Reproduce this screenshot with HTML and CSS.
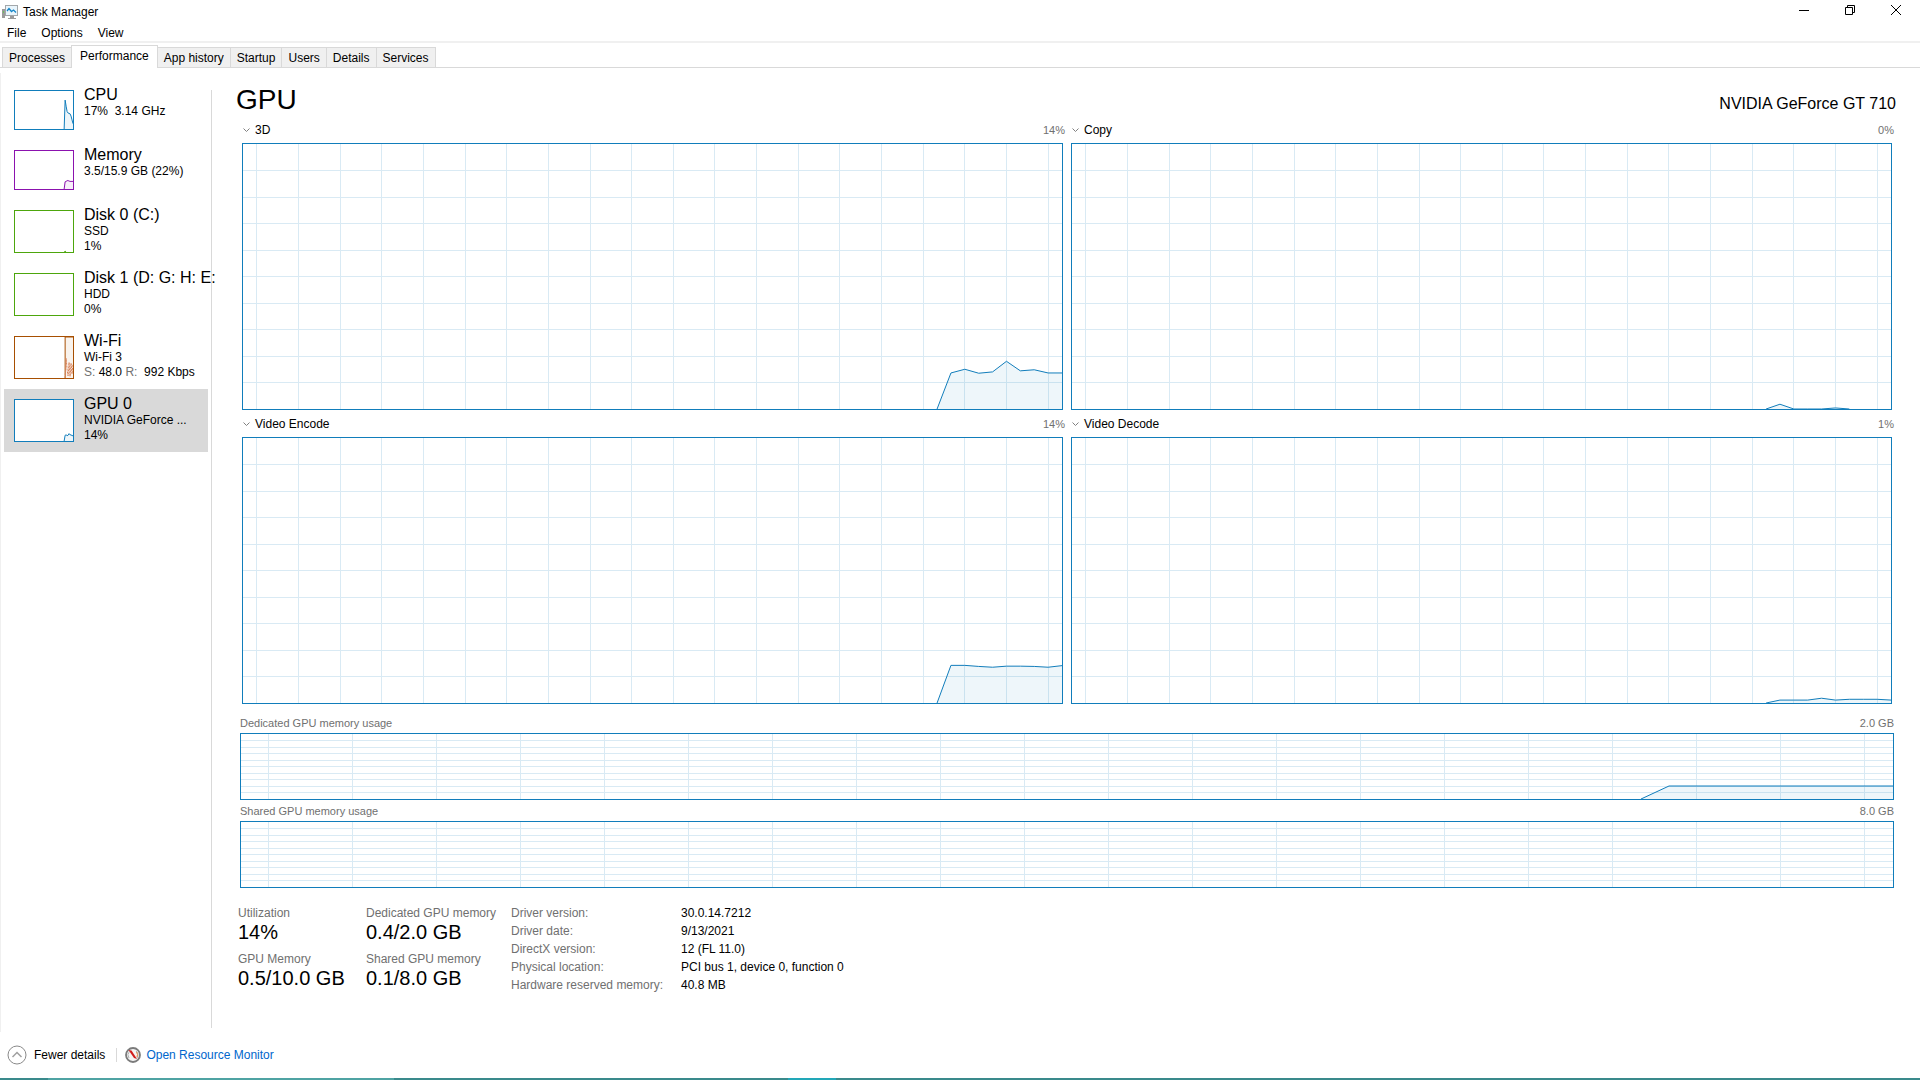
FILE: index.html
```html
<!DOCTYPE html>
<html lang="en">
<head>
    <meta charset="UTF-8">
    <meta name="viewport" content="width=device-width, initial-scale=1.0">
    <title>Task Manager</title>
    <link rel="stylesheet" href="styles.css">
</head>
<body>

<header class="titlebar">
    <svg class="app-icon" width="17" height="15" viewBox="0 0 17 15">
        <rect x="0" y="4" width="3" height="9" fill="#9a9a9a"/>
        <rect x="1" y="6" width="1" height="2" fill="#6fbf5f"/>
        <rect x="3.500" y="0.500" width="12" height="10" fill="#e9f5fc" stroke="#a3a7aa"/>
        <path d="M5 6 L7 3.500 L9.500 6.500 L11.500 5 L14 7.500" fill="none" stroke="#1786c8" stroke-width="1.300"/>
        <path d="M8 11h4v2h2v1H6v-1h2z" fill="#9a9a9a"/>
    </svg>
    <span class="app-name">Task Manager</span>
    <div class="window-buttons">
        <button aria-label="Minimize"><svg width="10" height="10"><path d="M0 5.500h10"/></svg></button>
        <button aria-label="Restore"><svg width="10" height="10"><path d="M0.500 2.500h7v7h-7zM2.500 2.500v-2h7v7h-2"/></svg></button>
        <button aria-label="Close"><svg width="10" height="10"><path d="M0 0L10 10M10 0L0 10"/></svg></button>
    </div>
</header>

<nav class="menu">
    <button>File</button>
    <button>Options</button>
    <button>View</button>
</nav>

<nav class="tabs">
    <button>Processes</button>
    <button class="active">Performance</button>
    <button>App history</button>
    <button>Startup</button>
    <button>Users</button>
    <button>Details</button>
    <button>Services</button>
</nav>

<div class="content">
    <aside class="sidebar">
        <button class="item">
            <svg class="thumb blue" data-values="0,76,60,46,42,41,40,34,24,14"></svg>
            <span class="info"><span class="name">CPU</span><span>17%&nbsp; 3.14 GHz</span></span>
        </button>
        <button class="item">
            <svg class="thumb purple" data-values="0,19,20,22,22,21,20,20,20,20"></svg>
            <span class="info"><span class="name">Memory</span><span>3.5/15.9 GB (22%)</span></span>
        </button>
        <button class="item">
            <svg class="thumb tall green" data-values="0,2,0"></svg>
            <span class="info"><span class="name">Disk 0 (C:)</span><span>SSD</span><span>1%</span></span>
        </button>
        <button class="item">
            <svg class="thumb tall green"></svg>
            <span class="info"><span class="name">Disk 1 (D: G: H: E:</span><span>HDD</span><span>0%</span></span>
        </button>
        <button class="item">
            <svg class="thumb tall orange" data-values="100,100,100,100,100,100,100,100,100" data-second="0,48,20,5,38,4,36,10,34"></svg>
            <span class="info"><span class="name">Wi-Fi</span><span>Wi-Fi 3</span><span><i>S:</i> 48.0 <i>R:</i>&nbsp; 992 Kbps</span></span>
        </button>
        <button class="item selected">
            <svg class="thumb tall blue" data-values="0,14,15,13,14,18,15,15,13,13"></svg>
            <span class="info"><span class="name">GPU 0</span><span>NVIDIA GeForce ...</span><span>14%</span></span>
        </button>
    </aside>

    <main>
        <div class="heading">
            <h1>GPU</h1>
            <h2>NVIDIA GeForce GT 710</h2>
        </div>

        <div class="engines">
            <section>
                <div class="engine-head">
                    <button><svg width="7" height="5"><path d="M0.500 0.500l3 3l3-3"/></svg>3D</button>
                    <span>14%</span>
                </div>
                <svg class="chart blue" data-grid="1" data-values="0,13.6,15,13.5,14,18,14.4,14.8,13.6,13.6"></svg>
            </section>
            <section>
                <div class="engine-head">
                    <button><svg width="7" height="5"><path d="M0.500 0.500l3 3l3-3"/></svg>Copy</button>
                    <span>0%</span>
                </div>
                <svg class="chart blue" data-grid="1" data-values="0,1.8,0,0,0,0.4,0"></svg>
            </section>
            <section>
                <div class="engine-head">
                    <button><svg width="7" height="5"><path d="M0.500 0.500l3 3l3-3"/></svg>Video Encode</button>
                    <span>14%</span>
                </div>
                <svg class="chart blue" data-grid="1" data-values="0,14.2,14.2,13.8,13.5,13.9,13.9,13.8,13.5,14.1"></svg>
            </section>
            <section>
                <div class="engine-head">
                    <button><svg width="7" height="5"><path d="M0.500 0.500l3 3l3-3"/></svg>Video Decode</button>
                    <span>1%</span>
                </div>
                <svg class="chart blue" data-grid="1" data-values="0,1.1,1.1,1.1,1.8,1.1,1.4,1.4,1.4,1.1"></svg>
            </section>
        </div>

        <div class="memory">
            <div class="memory-head"><span>Dedicated GPU memory usage</span><span>2.0 GB</span></div>
            <svg class="chart small blue" data-grid="1" data-values="0,20,20,20,20,20,20,20,20,20"></svg>
            <div class="memory-head"><span>Shared GPU memory usage</span><span>8.0 GB</span></div>
            <svg class="chart small blue" data-grid="1"></svg>
        </div>

        <div class="stats">
            <dl>
                <dt>Utilization</dt>
                <dd>14%</dd>
                <dt>GPU Memory</dt>
                <dd>0.5/10.0 GB</dd>
            </dl>
            <dl>
                <dt>Dedicated GPU memory</dt>
                <dd>0.4/2.0 GB</dd>
                <dt>Shared GPU memory</dt>
                <dd>0.1/8.0 GB</dd>
            </dl>
            <table>
                <tr><th>Driver version:</th><td>30.0.14.7212</td></tr>
                <tr><th>Driver date:</th><td>9/13/2021</td></tr>
                <tr><th>DirectX version:</th><td>12 (FL 11.0)</td></tr>
                <tr><th>Physical location:</th><td>PCI bus 1, device 0, function 0</td></tr>
                <tr><th>Hardware reserved memory:</th><td>40.8 MB</td></tr>
            </table>
        </div>
    </main>
</div>

<footer>
    <button class="fewer">
        <svg width="20" height="20" viewBox="0 0 20 20" fill="none">
            <circle cx="10" cy="10" r="9" stroke="#8a8a8a"/>
            <path d="M5.500 12L10 7.500L14.500 12" stroke="#a0a0a0" stroke-width="1.500"/>
        </svg>
        Fewer details
    </button>
    <span class="separator"></span>
    <svg width="16" height="16" viewBox="0 0 16 16" fill="none">
        <circle cx="8" cy="8" r="7" fill="#f4f4f4" stroke="#7b7b7b" stroke-width="1.800"/>
        <path d="M4 11A5 5 0 0 1 4.500 4.500M11 4a5 5 0 0 1 1 7" stroke="#b0b0b0"/>
        <path d="M11.500 5a5 5 0 0 1 0.500 5" stroke="#e58b4a"/>
        <path d="M3.500 3L6.500 3.500L12 12L9 11Z" fill="#d01c1c"/>
    </svg>
    <a href="#">Open Resource Monitor</a>
</footer>
<div class="taskbar"><span class="running"></span><span class="current"></span></div>

<script>
    // every chart covers 60 samples, newest on the right
    const STEPS = 59;
    const SHOWN = 10;

    function linePoints(values, first, w, h) {
        return values.map((v, i) => `${(first + i) * w / STEPS},${h - v * h / 100}`).join(' ');
    }

    function drawChart(svg) {
        const box = svg.getBoundingClientRect();
        const w = box.width - 2;
        const h = box.height - 2;
        let out = '';

        if (svg.dataset.grid) {
            for (let i = 1; i < STEPS; i += 3) {
                const x = Math.ceil(i * w / STEPS) - 0.5;
                out += `<line class="grid" x1="${x}" y1="0" x2="${x}" y2="${h}"/>`;
            }
            for (let i = 1; i < SHOWN; i++) {
                const y = Math.floor(i * h / 10) + 0.5;
                out += `<line class="grid" x1="0" y1="${y}" x2="${w}" y2="${y}"/>`;
            }
        }

        if (svg.dataset.values) {
            const values = svg.dataset.values.split(',').map(Number);
            // short series that end at zero start at the same sample as the full ones
            const first = values[values.length - 1] === 0 ? STEPS - SHOWN + 1 : STEPS - values.length + 1;
            const start = first * w / STEPS;
            const end = (first + values.length - 1) * w / STEPS;
            const points = `${start},${h} ${linePoints(values, first, w, h)}`;
            out += `<polygon class="area" points="${points} ${end},${h}"/>`;
            out += `<polyline class="line" points="${points}"/>`;
        }

        if (svg.dataset.second) {
            const values = svg.dataset.second.split(',').map(Number);
            const points = linePoints(values, STEPS - values.length + 1, w, h);
            out += `<polyline class="line dashed" points="${points}"/>`;
        }

        svg.setAttribute('viewBox', `0 0 ${w} ${h}`);
        svg.innerHTML = out;
    }

    function drawAll() {
        document.querySelectorAll('.chart, .thumb').forEach(drawChart);
    }

    drawAll();
    window.addEventListener('resize', drawAll);
</script>

</body>
</html>
```
FILE: styles.css
```css
* {
    box-sizing: border-box;
}

body {
    margin: 0;
    min-height: 100vh;
    display: flex;
    flex-direction: column;
    background: #fff;
    color: #000;
    font-family: "Liberation Sans", Arial, sans-serif;
    font-size: 12px;
}

button {
    padding: 0;
    border: none;
    background: none;
    color: inherit;
    font: inherit;
    text-align: left;
}

/* Title bar and menu */
.titlebar {
    display: flex;
    align-items: center;
    height: 24px;
    padding: 0 1px 0 2px;
}

.app-name {
    margin-left: 4px;
}

.window-buttons {
    display: flex;
    margin-left: auto;
}

.window-buttons button {
    display: flex;
    justify-content: center;
    width: 46px;
    padding-bottom: 4px;
}

.window-buttons path {
    fill: none;
    stroke: #000;
}

.menu {
    display: flex;
    gap: 15px;
    height: 19px;
    padding: 0 7px;
    border-bottom: 2px solid #f0f0f0;
}

/* Tabs */
.tabs {
    display: flex;
    align-items: flex-end;
    height: 25px;
    padding-left: 2px;
    border-bottom: 1px solid #d9d9d9;
}

.tabs button {
    height: 20px;
    padding: 0 6px;
    background: #f0f0f0;
    border: 1px solid #d9d9d9;
    border-width: 1px 1px 0 0;
}

.tabs button:first-child {
    border-left-width: 1px;
}

.tabs .active {
    height: 23px;
    margin: 0 0 -1px -1px;
    padding: 0 8px 3px;
    background: #fff;
    border-left-width: 1px;
}

/* Page content */
.content {
    flex: 1;
    display: flex;
    margin-top: 5px;
    border-left: 1px solid #f0f0f0;
}

.sidebar {
    width: 210px;
    flex-shrink: 0;
    padding: 7px 0 0 3px;
}

.item {
    display: flex;
    align-items: flex-start;
    gap: 10px;
    width: 204px;
    padding: 5px 0 0 10px;
}

.item.selected {
    background: #d9d9d9;
}

.thumb {
    display: block;
    flex-shrink: 0;
    width: 60px;
    height: 40px;
    margin: 5px 0 10px;
    background: #fff;
    border: 1px solid;
}

.thumb.tall {
    height: 43px;
}

.info {
    display: flex;
    flex-direction: column;
    padding-top: 1px;
    line-height: 15px;
    white-space: nowrap;
}

.info .name {
    font-size: 16px;
    line-height: 18px;
}

.info i {
    color: #707070;
    font-style: normal;
}

main {
    flex: 1;
    margin: 17px 0 4px;
    padding: 0 24px;
    border-left: 1px solid #d9d9d9;
}

.heading {
    display: flex;
    justify-content: space-between;
    align-items: baseline;
    margin-bottom: 8px;
    line-height: 20px;
}

.heading h1 {
    margin: 0;
    font-size: 28px;
    font-weight: normal;
}

.heading h2 {
    margin: 0;
    font-size: 16px;
    font-weight: normal;
}

/* Charts */
.blue {
    color: #117dbb;
}

.purple {
    color: #8b12ae;
}

.green {
    color: #4da60c;
}

.orange {
    color: #a74f01;
}

.chart {
    display: block;
    width: 100%;
    height: 267px;
    border: 1px solid;
}

.chart.small {
    height: 67px;
}

.grid {
    stroke: #d9eaf4;
    shape-rendering: crispEdges;
}

.area {
    fill: currentColor;
    fill-opacity: 0.07;
}

.line {
    fill: none;
    stroke: currentColor;
}

.dashed {
    stroke: #d9825a;
    stroke-dasharray: 2 1;
}

.engines {
    display: grid;
    grid-template-columns: 1fr 1fr;
    gap: 6px 8px;
    margin: 0 4px 0 6px;
}

.engine-head {
    display: flex;
    justify-content: space-between;
    align-items: center;
    height: 16px;
    margin: 0 -2px 5px 1px;
}

.engine-head button {
    display: flex;
    align-items: center;
    gap: 5px;
}

.engine-head path {
    fill: none;
    stroke: #808080;
}

.engine-head span,
.memory-head {
    color: #707070;
    font-size: 11px;
}

.memory {
    margin: 12px 2px 16px 4px;
}

.memory-head {
    display: flex;
    justify-content: space-between;
    margin: 4px 0 3px;
    line-height: 14px;
}

/* Numbers below the charts */
.stats {
    display: flex;
    padding-left: 2px;
    line-height: 18px;
}

.stats dl {
    width: 128px;
    margin: 0;
}

.stats dl + dl {
    width: 145px;
}

.stats dt,
.stats th {
    color: #707070;
}

.stats dd {
    margin: 0 0 8px;
    font-size: 20px;
    line-height: 20px;
}

.stats table {
    align-self: flex-start;
    border-collapse: collapse;
}

.stats th {
    width: 170px;
    padding: 0;
    font-weight: normal;
    text-align: left;
}

.stats td {
    padding: 0;
}

/* Footer */
footer {
    display: flex;
    align-items: center;
    height: 46px;
    padding-left: 7px;
}

.fewer {
    display: flex;
    align-items: center;
    gap: 7px;
}

.separator {
    width: 1px;
    height: 14px;
    margin: 0 8px 0 11px;
    background: #d9d9d9;
}

footer a {
    margin-left: 5px;
    color: #0066cc;
    text-decoration: none;
}

.taskbar {
    display: flex;
    height: 2px;
    background: #3a8a8c;
}

.running {
    width: 18%;
    margin-left: 48px;
    background: #4fa3a3;
}

.current {
    width: 48px;
    margin-left: 394px;
    background: #22a7b8;
}
```
